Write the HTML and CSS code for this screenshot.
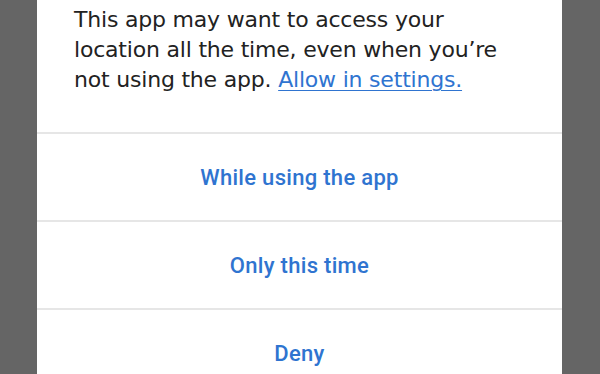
FILE: index.html
```html
<!DOCTYPE html>
<html>
<head>
<meta charset="utf-8">
<link rel="stylesheet" href="styles.css">
</head>
<body>
<div class="screen">
  <div class="dialog">
    <p class="message">This app may want to access your location all the time, even when you’re not using the app. <a class="link" href="#">Allow in settings.</a></p>
    <div class="actions">
      <div class="action">While using the app</div>
      <div class="action">Only this time</div>
      <div class="action">Deny</div>
    </div>
  </div>
</div>
</body>
</html>
```
FILE: styles.css
```css
html, body {
  margin: 0;
  padding: 0;
  height: 100%;
  overflow: hidden;
}
body {
  background: #656565;
  font-family: Roboto, "Noto Sans", sans-serif;
}
.screen {
  display: flex;
  justify-content: center;
  padding-left: 37px;
  padding-right: 38px;
  height: 100%;
  overflow: hidden;
}
.dialog {
  flex: 1;
  background: #ffffff;
}
.message {
  margin: 0;
  padding: 5px 50px 0 37px;
  height: 132px;
  box-sizing: border-box;
  font-family: "DejaVu Sans", sans-serif;
  font-size: 22px;
  line-height: 30px;
  letter-spacing: -0.2px;
  color: #222222;
}
.link {
  color: #2f74d0;
  text-decoration: underline;
  text-underline-offset: 3px;
  text-decoration-thickness: 1px;
}
.actions {
  display: flex;
  flex-direction: column;
}
.action {
  height: 86px;
  border-top: 2px solid #e6e6e6;
  display: flex;
  align-items: center;
  justify-content: center;
  font-size: 22px;
  font-weight: 500;
  letter-spacing: 0.3px;
  color: #2f74d0;
}
```
